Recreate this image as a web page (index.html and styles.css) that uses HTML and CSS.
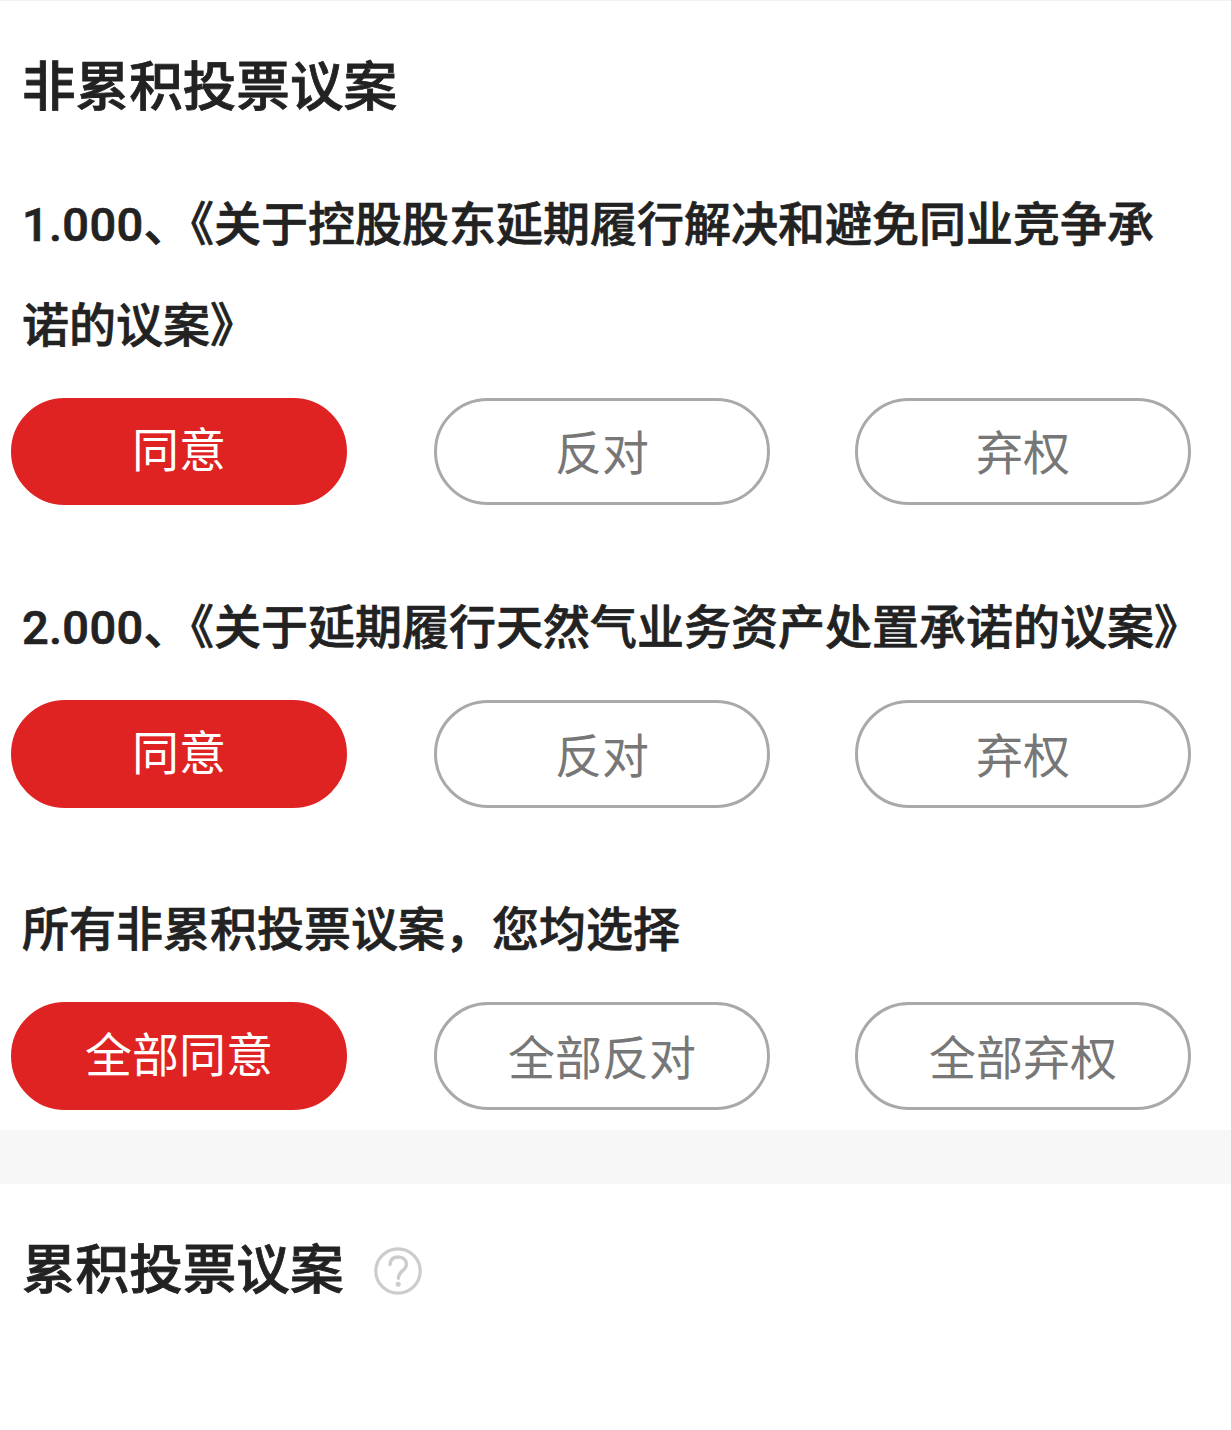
FILE: index.html
```html
<!DOCTYPE html>
<html lang="zh-CN">
<head>
<meta charset="utf-8">
<title>投票议案</title>
<link rel="stylesheet" href="styles.css">
</head>
<body>
<main class="page">
  <section class="section">
    <h1 class="heading">非累积投票议案</h1>
    <article class="proposal">
      <h2 class="title"><span class="number">1.000</span>、《关于控股股东延期履行解决和避免同业竞争承<br>诺的议案》</h2>
      <div class="options">
        <button class="option selected">同意</button>
        <button class="option">反对</button>
        <button class="option">弃权</button>
      </div>
    </article>
    <article class="proposal">
      <h2 class="title"><span class="number">2.000</span>、《关于延期履行天然气业务资产处置承诺的议案》</h2>
      <div class="options tall">
        <button class="option selected">同意</button>
        <button class="option">反对</button>
        <button class="option">弃权</button>
      </div>
    </article>
    <article class="proposal">
      <h2 class="title">所有非累积投票议案，您均选择</h2>
      <div class="options tall">
        <button class="option selected">全部同意</button>
        <button class="option">全部反对</button>
        <button class="option">全部弃权</button>
      </div>
    </article>
  </section>
  <div class="divider"></div>
  <section class="cumulative">
    <h1 class="heading">累积投票议案</h1>
    <svg class="help" viewBox="0 0 48 48" fill="none" stroke="#ccc">
      <circle cx="24" cy="24" r="22.2" stroke-width="3.2"/>
      <path d="M16 17.5C16.3 12.5 19.6 10 24.2 10C29 10 32.4 13 32.4 17.6C32.4 23.8 24.4 23.6 24.4 31.3" stroke-width="3.4" stroke-linecap="round"/>
      <circle cx="24.2" cy="37.3" r="2.5" fill="#ccc" stroke="none"/>
    </svg>
  </section>
</main>
</body>
</html>
```
FILE: styles.css
```css
* { box-sizing: border-box; }
body {
  margin: 0;
  background: #fff;
  color: #222;
  font-family: Roboto, "Noto Sans CJK SC", sans-serif;
}
.page {
  height: 1430px;
  border-top: 1px solid #f2f2f2;
  overflow: hidden;
}
.section { height: 1129px; }
.heading {
  margin: 0;
  padding-left: 22px;
  font-size: 53.6px;
  line-height: 80px;
  font-weight: 500;
  -webkit-text-stroke: 0.8px #222;
  white-space: nowrap;
}
.section > .heading { padding-top: 47px; height: 173px; }
.title {
  margin: 0;
  padding-left: 22px;
  font-size: 47px;
  line-height: 101px;
  font-weight: 500;
  -webkit-text-stroke: 0.7px #222;
  white-space: nowrap;
}
.number { letter-spacing: 0.3px; }
.options {
  display: flex;
  padding-left: 11px;
  margin-top: 22px;
}
.option {
  width: 336px;
  height: 107px;
  margin: 0 85px 0 0;
  padding: 5px 0 0;
  flex: none;
  border: 3px solid #a9a9a9;
  border-radius: 54px;
  background: #fff;
  color: #777;
  font-family: inherit;
  font-size: 47px;
  line-height: 68px;
}
.option.selected {
  margin-right: 87px;
  border-color: #df2222;
  background: #df2222;
  color: #fff;
  padding: 0 0 1px;
}
.tall .option { height: 108px; }
.proposal + .proposal { margin-top: 72px; }
.tall { margin-bottom: -1px; }
.divider { height: 54px; background: #f7f7f7; }
.cumulative {
  display: flex;
  padding-top: 47px;
}
.help { width: 48px; height: 48px; margin: 16px 0 0 30px; }
```
